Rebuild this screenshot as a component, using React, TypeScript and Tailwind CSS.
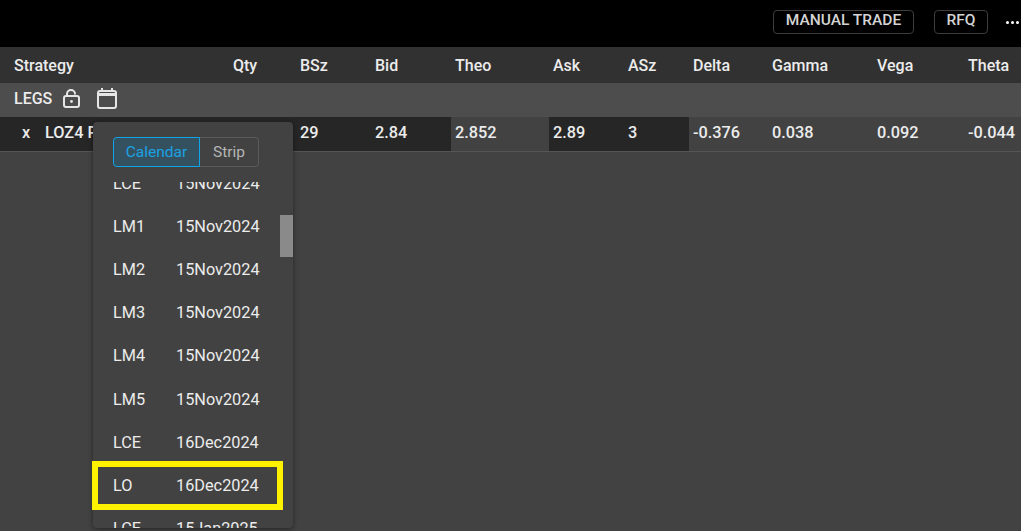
const columns = [
  { label: "Strategy", value: "", width: "w-[229px]", dark: true, first: true },
  { label: "Qty", value: "", width: "w-[67px]", dark: true },
  { label: "BSz", value: "29", width: "w-[75px]", dark: true },
  { label: "Bid", value: "2.84", width: "w-[80px]", dark: true },
  { label: "Theo", value: "2.852", width: "w-[98px]", dark: false },
  { label: "Ask", value: "2.89", width: "w-[75px]", dark: true },
  { label: "ASz", value: "3", width: "w-[65px]", dark: true },
  { label: "Delta", value: "-0.376", width: "w-[79px]", dark: false },
  { label: "Gamma", value: "0.038", width: "w-[105px]", dark: false },
  { label: "Vega", value: "0.092", width: "w-[91px]", dark: false },
  { label: "Theta", value: "-0.044", width: "w-[57px]", dark: false },
];

const expiries = [
  ["LCE", "15Nov2024"],
  ["LM1", "15Nov2024"],
  ["LM2", "15Nov2024"],
  ["LM3", "15Nov2024"],
  ["LM4", "15Nov2024"],
  ["LM5", "15Nov2024"],
  ["LCE", "16Dec2024"],
  ["LO", "16Dec2024"],
  ["LCE", "15Jan2025"],
];

function LockOpen() {
  return (
    <svg width="17" height="19" viewBox="0 0 17 19" fill="none" stroke="#e6e6e6" strokeWidth="2">
      <path d="M4 7V5a4 4 0 0 1 8 0v.5" />
      <rect x="1" y="7" width="15" height="11" rx="2" />
      <circle cx="8.5" cy="12.5" r="1.4" fill="#e6e6e6" stroke="none" />
    </svg>
  );
}

function CalendarIcon() {
  return (
    <svg width="20" height="21" viewBox="0 0 20 21" fill="none" stroke="#e6e6e6" strokeWidth="2">
      <rect x="1" y="3" width="18" height="17" rx="2" />
      <path d="M1 6.5h18" strokeWidth="3" />
      <path d="M5 0v3M15 0v3" />
    </svg>
  );
}

export default function App() {
  return (
    <div className="relative h-[531px] w-[1021px] overflow-hidden bg-[#424242] font-['Roboto',sans-serif] text-[16.3px] font-medium text-[#ececec]">
      <div className="flex h-[47px] items-start justify-end bg-black pt-[10px]">
        <button className="mr-5 flex h-[24px] w-[141px] items-center justify-center rounded border border-[#3d3d3d] pb-[2px] text-[15.5px] font-medium text-[#d4d4d4]">
          MANUAL TRADE
        </button>
        <button className="mr-[18px] flex h-[24px] w-[54px] items-center justify-center rounded border border-[#3d3d3d] pb-[2px] text-[15.5px] font-medium text-[#d4d4d4]">
          RFQ
        </button>
        <div className="mt-[11px] flex w-[15px] gap-[2px] overflow-hidden">
          <span className="h-[3px] w-[3px] shrink-0 rounded-full bg-white" />
          <span className="h-[3px] w-[3px] shrink-0 rounded-full bg-white" />
          <span className="h-[3px] w-[3px] shrink-0 rounded-full bg-white" />
        </div>
      </div>

      <div className="flex h-9 items-center bg-[#313131] pt-[2px] text-[16px]">
        {columns.map((col) => (
          <div key={col.label} className={`${col.width} shrink-0 ${col.first ? "pl-[14px]" : "pl-1"}`}>
            {col.label}
          </div>
        ))}
      </div>

      <div className="flex h-[34px] items-center bg-[#4d4d4d] pb-[3px] pl-[14px]">
        <span className="w-[49px] text-[16px]">LEGS</span>
        <LockOpen />
        <span className="ml-[17px]">
          <CalendarIcon />
        </span>
      </div>

      <div className="flex h-[35px] items-center border-b border-[#555555]">
        {columns.map((col) => (
          <div
            key={col.label}
            className={`${col.width} flex h-full shrink-0 items-center pb-[2px] pl-1 ${col.dark ? "bg-[#262626]" : ""}`}
          >
            {col.first ? (
              <span className="flex pl-[18px]">
                <span className="w-[23px]">x</span>
                <span>LOZ4 P</span>
              </span>
            ) : (
              col.value
            )}
          </div>
        ))}
      </div>

      <div className="absolute left-[93px] top-[122px] flex h-[406px] w-[200px] flex-col rounded bg-[#424242] font-normal shadow-[0_1px_5px_rgba(0,0,0,0.45)]">
        <div className="flex h-[60px] shrink-0 items-start pl-5 pt-[15px] text-[15.5px]">
          <div className="flex h-[30px] w-[87px] items-center justify-center rounded-l border border-[#0ea5e9] bg-[#35515f] pt-[2px] text-[#1ba1e2]">
            Calendar
          </div>
          <div className="flex h-[30px] w-[59px] items-center justify-center rounded-r border border-l-0 border-[#5a5a5a] pt-[2px] text-[#b5b5b5]">
            Strip
          </div>
        </div>
        <div className="relative h-[346px] overflow-hidden">
          <div className="-mt-[19px] flex flex-col">
            {expiries.map(([name, date], i) => (
              <div key={i} className="flex h-[43.06px] shrink-0 items-center pl-5">
                <span className="w-[63px]">{name}</span>
                <span>{date}</span>
              </div>
            ))}
          </div>
          <div className="absolute right-0 top-[33px] h-[42px] w-[13px] bg-[#8a8a8a]" />
        </div>
      </div>

      <div className="absolute left-[92px] top-[461px] h-[49px] w-[191px] border-[6px] border-[#fff200]" />
    </div>
  );
}
